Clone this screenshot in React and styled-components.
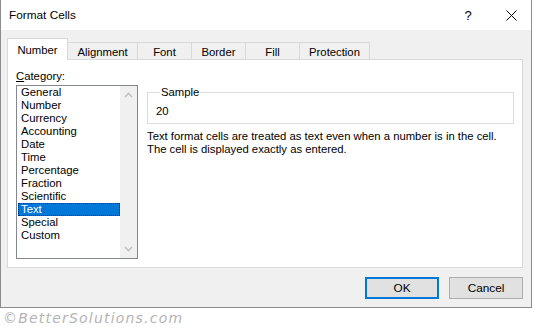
import styled, { createGlobalStyle } from 'styled-components'

const GlobalStyle = createGlobalStyle`
    body{
        margin: 0;
        background-color: #fff;
        font-family: "Segoe UI", "Liberation Sans", sans-serif;
        font-size: 11.3px;
        color: #000;
    }
`

const Window = styled.div`
    width: 532px;
    height: 308px;
    box-sizing: border-box;
    border: 1px solid #8c8c8c;
    border-top: none;
    background-color: #f0f0f0;
    display: flex;
    flex-direction: column;
`
const TitleBar = styled.div`
    height: 30px;
    background-color: #fff;
    display: flex;
    align-items: center;
    padding-left: 8px;
    font-size: 11.8px;

    .title{
        flex: 1;
        padding-bottom: 1px;
    }
`
const TitleButton = styled.div`
    width: ${p => p.$w}px;
    height: 30px;
    display: flex;
    align-items: center;
    justify-content: center;
    font-size: 13px;
`
const Body = styled.div`
    flex: 1;
    display: flex;
    flex-direction: column;
    padding: 8px 8px 0 6px;
`
const TabRow = styled.div`
    height: 22px;
    margin-bottom: -1px;
    display: flex;
    align-items: flex-end;
`
const Tab = styled.div`
    position: relative;
    width: ${p => p.$w}px;
    height: ${p => p.$active ? 22 : 17}px;
    margin-bottom: ${p => p.$active ? 0 : 1}px;
    margin-left: ${p => p.$first ? 0 : -1}px;
    box-sizing: border-box;
    border: 1px solid #d9d9d9;
    border-bottom: none;
    background-color: ${p => p.$active ? '#fff' : '#f0f0f0'};
    z-index: ${p => p.$active ? 1 : 0};
    display: flex;
    justify-content: center;
    align-items: center;
    padding-top: ${p => p.$active ? 1 : 2}px;
`
const Panel = styled.div`
    height: 209px;
    box-sizing: border-box;
    background-color: #fff;
    border: 1px solid #d9d9d9;
    display: flex;
    padding: 9px 8px 0 8px;
    gap: 9px;
`
const CategoryColumn = styled.div`
    display: flex;
    flex-direction: column;
`
const Label = styled.div`
    height: 15px;
    line-height: 15px;
    margin-bottom: 1px;
`
const ListBox = styled.div`
    width: 122px;
    height: 174px;
    box-sizing: border-box;
    border: 1px solid #828790;
    display: flex;
`
const Items = styled.div`
    flex: 1;
    padding-left: 1px;
`
const Item = styled.div`
    height: 13px;
    line-height: 13px;
    padding-left: 2px;
    box-sizing: border-box;
    background-color: ${p => p.$selected ? '#0078d7' : 'transparent'};
    color: ${p => p.$selected ? '#fff' : '#000'};
    border: 1px dotted ${p => p.$selected ? '#0a2a66' : 'transparent'};
    display: flex;
    align-items: center;
`
const ScrollBar = styled.div`
    width: 17px;
    background-color: #f0f0f0;
    display: flex;
    flex-direction: column;
    justify-content: space-between;
    align-items: center;
    padding: 6px 0;
`
const DetailColumn = styled.div`
    flex: 1;
    display: flex;
    flex-direction: column;
    padding-top: 17px;
`
const GroupBox = styled.fieldset`
    margin: 0;
    padding: 0 0 5px 8px;
    border: 1px solid #dcdcdc;

    legend{
        padding: 0 1px;
        margin-left: 4px;
        line-height: 13px;
    }
    div{
        line-height: 13px;
        padding-top: 6px;
    }
`
const Description = styled.p`
    margin: 6px 0 0 0;
    line-height: 13px;
`
const ButtonRow = styled.div`
    display: flex;
    justify-content: flex-end;
    gap: 10px;
    margin-top: 9px;
`
const Button = styled.div`
    width: 74px;
    height: 22px;
    box-sizing: border-box;
    background-color: #e1e1e1;
    border: ${p => p.$default ? '2px solid #0078d7' : '1px solid #adadad'};
    display: flex;
    align-items: center;
    justify-content: center;
    font-size: 11.8px;
`
const Watermark = styled.div`
    padding: 2px 0 0 3px;
    font-family: "DejaVu Sans", sans-serif;
    font-style: italic;
    font-size: 14px;
    letter-spacing: 1.2px;
    color: #b4b4b4;
`

const tabs = [
    ['Number', 61], ['Alignment', 71], ['Font', 55],
    ['Border', 55], ['Fill', 55], ['Protection', 71]
]
const categories = [
    'General', 'Number', 'Currency', 'Accounting', 'Date', 'Time',
    'Percentage', 'Fraction', 'Scientific', 'Text', 'Special', 'Custom'
]

const Chevron = ({ up }) => (
    <svg width="9" height="6" viewBox="0 0 9 6">
        <path d={up ? 'M1 5 L4.5 1.5 L8 5' : 'M1 1 L4.5 4.5 L8 1'} fill="none" stroke="#c2c2c2" strokeWidth="1.6" />
    </svg>
)

const App = () => {
    return (
        <>
            <GlobalStyle />
            <Window>
                <TitleBar>
                    <span className='title'>Format Cells</span>
                    <TitleButton $w={46}>?</TitleButton>
                    <TitleButton $w={40}>
                        <svg width="11" height="11" viewBox="0 0 11 11">
                            <path d="M0.5 0.5 L10.5 10.5 M10.5 0.5 L0.5 10.5" stroke="#000" strokeWidth="1" />
                        </svg>
                    </TitleButton>
                </TitleBar>
                <Body>
                    <TabRow>
                        {tabs.map(([name, w], i) => (
                            <Tab key={name} $w={w} $first={i === 0} $active={i === 0}>{name}</Tab>
                        ))}
                    </TabRow>
                    <Panel>
                        <CategoryColumn>
                            <Label><u>C</u>ategory:</Label>
                            <ListBox>
                                <Items>
                                    {categories.map(c => (
                                        <Item key={c} $selected={c === 'Text'}>{c}</Item>
                                    ))}
                                </Items>
                                <ScrollBar>
                                    <Chevron up />
                                    <Chevron />
                                </ScrollBar>
                            </ListBox>
                        </CategoryColumn>
                        <DetailColumn>
                            <GroupBox>
                                <legend>Sample</legend>
                                <div>20</div>
                            </GroupBox>
                            <Description>
                                Text format cells are treated as text even when a number is in the cell.<br />
                                The cell is displayed exactly as entered.
                            </Description>
                        </DetailColumn>
                    </Panel>
                    <ButtonRow>
                        <Button $default>OK</Button>
                        <Button>Cancel</Button>
                    </ButtonRow>
                </Body>
            </Window>
            <Watermark>©BetterSolutions.com</Watermark>
        </>
    )
}

export default App
